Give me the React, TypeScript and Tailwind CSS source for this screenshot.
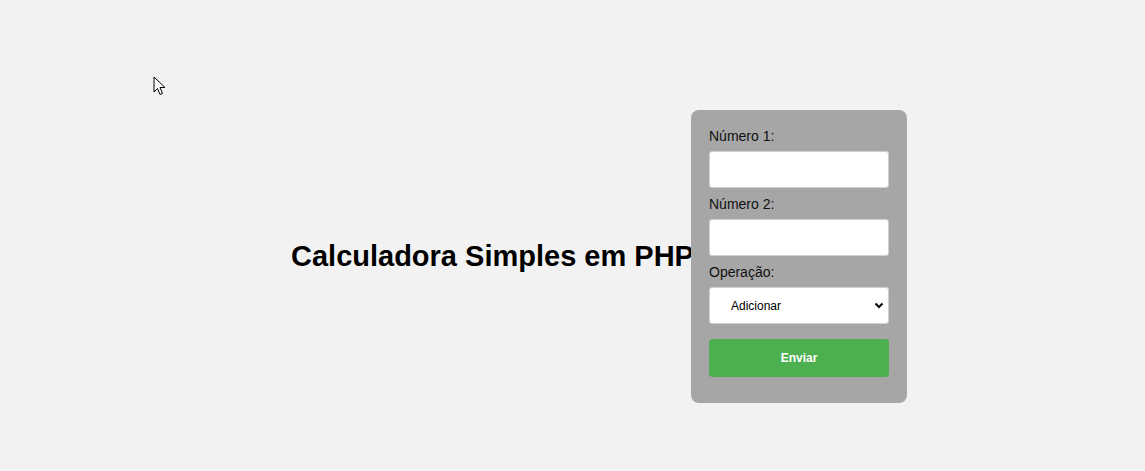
import React from "react";

const Cursor = () => (
    <svg
        className="absolute left-[153px] top-[76px]"
        width="14"
        height="21"
        viewBox="0 0 14 21"
    >
        <path
            d="M1 1 L1 16 L4.5 12.5 L7 18.5 L9.5 17.5 L7 11.5 L12 11.5 Z"
            fill="#fff"
            stroke="#000"
            strokeWidth="1"
            strokeLinejoin="miter"
        />
    </svg>
);

export default function App() {
    return (
        <div
            className="relative w-full h-[471px] bg-[#f2f2f2] flex items-center pl-[291px] pt-[42px]"
            style={{ fontFamily: '"Liberation Sans", Arial, sans-serif' }}
        >
            <Cursor />

            {/* TITLE */}
            <h1 className="text-[29px] font-bold text-black leading-none w-[400px] whitespace-nowrap">
                Calculadora Simples em PHP
            </h1>

            {/* FORM */}
            <form className="w-[216px] bg-[#a6a6a6] rounded-lg px-[18px] pt-[18px] pb-[26px] flex flex-col">
                <label className="text-[14px] text-[#111] leading-[16px] mb-[7px]">Número 1:</label>
                <input
                    type="text"
                    className="h-[37px] bg-white border border-[#d0d0d0] rounded-[3px] mb-[8px]"
                />

                <label className="text-[14px] text-[#111] leading-[16px] mb-[7px]">Número 2:</label>
                <input
                    type="text"
                    className="h-[37px] bg-white border border-[#d0d0d0] rounded-[3px] mb-[8px]"
                />

                <label className="text-[14px] text-[#111] leading-[16px] mb-[7px]">Operação:</label>
                <div className="relative h-[37px] bg-white border border-[#d0d0d0] rounded-[3px] flex items-center pl-[21px] mb-[15px]">
                    <span className="text-[12px] text-black">Adicionar</span>
                    <svg
                        className="absolute right-[4px] top-[14px]"
                        width="10"
                        height="8"
                        viewBox="0 0 10 8"
                    >
                        <path d="M1.5 1.5 L5 5 L8.5 1.5" fill="none" stroke="#000" strokeWidth="2" />
                    </svg>
                </div>

                <button
                    type="button"
                    className="h-[38px] bg-[#4caf50] rounded-[4px] text-white text-[12px] font-bold"
                >
                    Enviar
                </button>
            </form>
        </div>
    );
}
